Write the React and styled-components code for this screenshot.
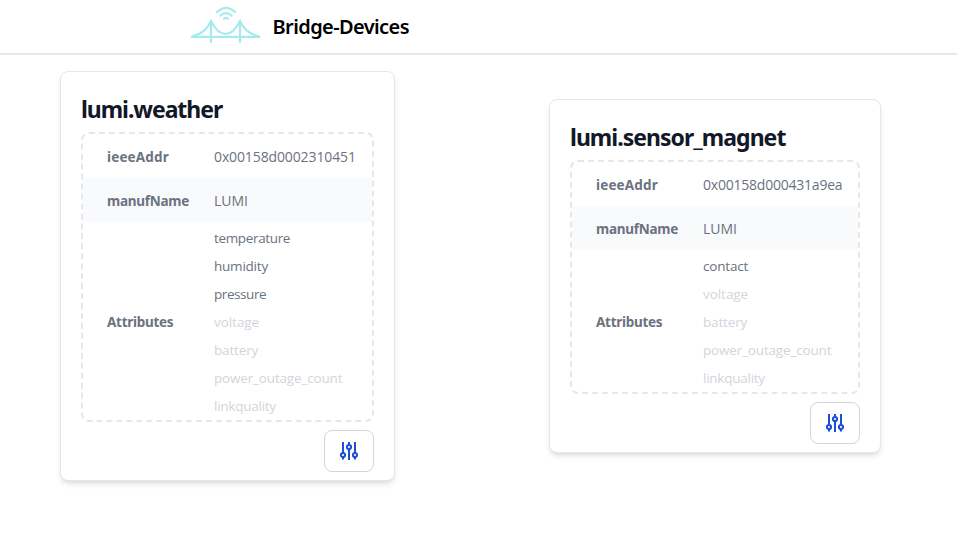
import React from "react";
import styled, { createGlobalStyle } from "styled-components";

const GlobalStyle = createGlobalStyle`
  * { box-sizing: border-box; }
  body { margin: 0; background: #fff; font-family: "Open Sans", "Noto Sans", sans-serif; }
`;

const Header = styled.header`
  display: flex;
  align-items: center;
  height: 55px;
  padding-left: 190px;
  border-bottom: 2px solid #e5e7eb;
`;

const Logo = styled.svg`
  width: 72px;
  height: 44px;
  margin-top: -5px;
`;

const Brand = styled.span`
  margin-left: 10.5px;
  font: 600 20px/28px "Noto Sans", sans-serif;
  letter-spacing: -0.6px;
  color: #000;
`;

const Devices = styled.main`
  display: flex;
  align-items: center;
  gap: 154px;
  padding: 16px 0 40px 60px;
`;

const Card = styled.article`
  display: flex;
  flex-direction: column;
  flex: none;
  width: ${(p) => p.$width}px;
  padding: 20px 20px 8px;
  border: 1px solid #e5e7eb;
  border-radius: 8px;
  background: #fff;
  box-shadow: 0 4px 6px -1px rgba(0, 0, 0, 0.1), 0 2px 4px -2px rgba(0, 0, 0, 0.1);
`;

const Title = styled.h2`
  height: 32px;
  margin: 0 0 8px;
  font: 700 23px/35px "Noto Sans", sans-serif;
  letter-spacing: ${(p) => p.$tracking}px;
  white-space: nowrap;
  color: #111827;
`;

const Table = styled.div`
  border: 2px dashed #e5e7eb;
  border-radius: 8px;
`;

const Row = styled.div`
  display: grid;
  grid-template-columns: 107px 1fr;
  align-items: center;
  min-height: 44px;
  padding-left: 24px;
  background: ${(p) => (p.$shaded ? "#f9fafb" : "transparent")};
`;

const Label = styled.span`
  padding-top: 2px;
  font: 700 13.5px/20px "Noto Sans", sans-serif;
  letter-spacing: ${(p) => p.$tracking || 0}px;
  color: #6b7280;
`;

const Value = styled.span`
  padding-top: 2px;
  font: 400 14px/20px "Open Sans", sans-serif;
  letter-spacing: ${(p) => p.$tracking || 0}px;
  white-space: nowrap;
  color: #6b7280;
`;

const Attributes = styled.ul`
  margin: 0;
  padding: 2px 0 0;
  list-style: none;
`;

const Attribute = styled.li`
  font: 400 13.5px/28px "Open Sans", sans-serif;
  letter-spacing: ${(p) => p.$tracking || 0}px;
  color: ${(p) => (p.$muted ? "#d1d5db" : "#6b7280")};
`;

const SettingsButton = styled.button`
  display: flex;
  align-items: center;
  justify-content: center;
  align-self: flex-end;
  width: 50px;
  height: 42px;
  margin-top: 8px;
  padding: 0;
  border: 1px solid #d1d5db;
  border-radius: 8px;
  background: #fff;
  color: #1d4ed8;
`;

const BridgeLogo = () => (
  <Logo viewBox="0 0 72 44" fill="none" stroke="#a5ebee" strokeLinecap="round">
    <path strokeWidth="2.2" d="M1.8 34.8H69.5" />
    <path strokeWidth="2.2" d="M21 19v21M50 19v21" />
    <path strokeWidth="2.1" d="M3 34C12 32 18 26 21 19C25 27 30 32 35.5 32S46 27 50 19C53 26 59 32 68 34" />
    <path strokeWidth="2.1" d="M26.8 10.2Q36 1.6 45.2 10.2M30.3 13.8Q36 8.6 41.7 13.8" />
    <path strokeWidth="2.2" d="M34.1 16.6Q36 15.2 37.9 16.6" />
  </Logo>
);

const SlidersIcon = () => (
  <svg width="18" height="18" viewBox="0 0 18 18" fill="none" stroke="currentColor" strokeWidth="2">
    <path d="M3 0v10.8M3 15.2V17.5M9 0v2.8M9 7.2V18M15 0v10.8M15 15.2V17.5" />
    <circle cx="3" cy="13" r="2.1" />
    <circle cx="9" cy="5" r="2.1" />
    <circle cx="15" cy="13" r="2.1" />
  </svg>
);

const trackings = {
  temperature: -0.35,
  humidity: -0.22,
  pressure: -0.42,
  voltage: -0.05,
  battery: -0.15,
  power_outage_count: -0.17,
  linkquality: -0.25,
  contact: -0.2,
};

const devices = [
  {
    name: "lumi.weather",
    width: 335,
    tracking: -1.05,
    address: "0x00158d0002310451",
    addressTracking: -0.12,
    active: ["temperature", "humidity", "pressure"],
    inactive: ["voltage", "battery", "power_outage_count", "linkquality"],
  },
  {
    name: "lumi.sensor_magnet",
    width: 332,
    tracking: -0.97,
    address: "0x00158d000431a9ea",
    addressTracking: -0.22,
    active: ["contact"],
    inactive: ["voltage", "battery", "power_outage_count", "linkquality"],
  },
];

const Device = ({ device }) => (
  <Card $width={device.width}>
    <Title $tracking={device.tracking}>{device.name}</Title>
    <Table>
      <Row>
        <Label $tracking={0.15}>ieeeAddr</Label>
        <Value $tracking={device.addressTracking}>{device.address}</Value>
      </Row>
      <Row $shaded>
        <Label $tracking={-0.25}>manufName</Label>
        <Value>LUMI</Value>
      </Row>
      <Row>
        <Label $tracking={-0.28}>Attributes</Label>
        <Attributes>
          {device.active.map((a) => (
            <Attribute key={a} $tracking={trackings[a]}>{a}</Attribute>
          ))}
          {device.inactive.map((a) => (
            <Attribute key={a} $muted $tracking={trackings[a]}>{a}</Attribute>
          ))}
        </Attributes>
      </Row>
    </Table>
    <SettingsButton aria-label="Settings">
      <SlidersIcon />
    </SettingsButton>
  </Card>
);

export default function App() {
  return (
    <>
      <GlobalStyle />
      <Header>
        <BridgeLogo />
        <Brand>Bridge-Devices</Brand>
      </Header>
      <Devices>
        {devices.map((d) => (
          <Device key={d.name} device={d} />
        ))}
      </Devices>
    </>
  );
}
